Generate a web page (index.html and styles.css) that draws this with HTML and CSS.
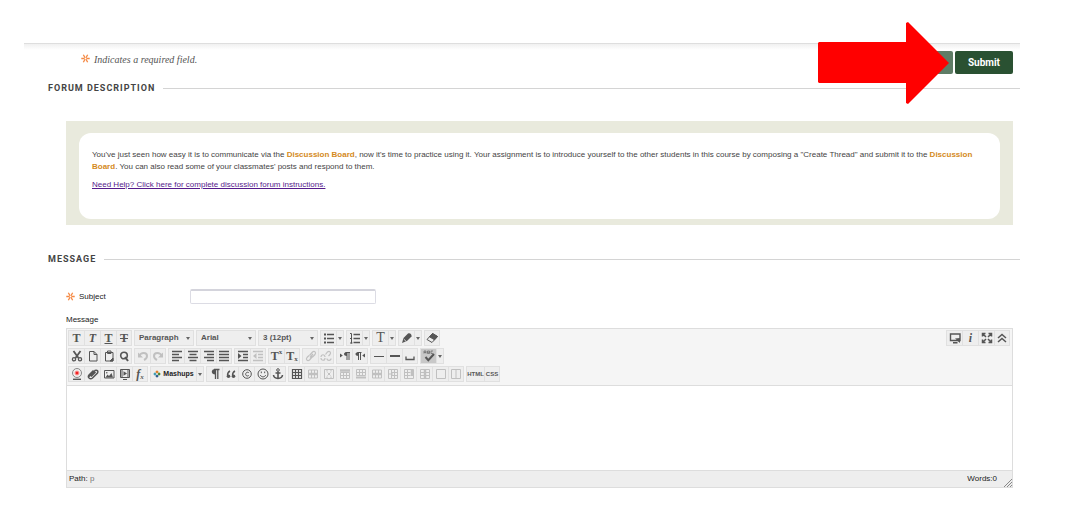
FILE: index.html
```html
<!DOCTYPE html>
<html lang="en">
<head>
<meta charset="utf-8">
<title>Create Thread</title>
<link rel="stylesheet" href="styles.css">
</head>
<body>
<svg class="defs" aria-hidden="true">
  <symbol id="star" viewBox="0 0 10 10"><path d="M.3 5h9.400M2.600.8l4.800 8.400M7.400.8L2.600 9.200" stroke="#f58a45" stroke-width="1.500" fill="none"/><circle cx="5" cy="5" r="1" fill="#fff"/></symbol>
  <symbol id="cut" viewBox="0 0 12 12"><path d="M2.500 1l5 7M9.500 1l-5 7" stroke-width="1.800"/><circle cx="3" cy="9.300" r="1.600" stroke-width="1.300"/><circle cx="9" cy="9.300" r="1.600" stroke-width="1.300"/></symbol>
  <symbol id="page" viewBox="0 0 12 12"><path d="M2.500 1.500h4.500l3 3v6.500h-7.500zM7 1.500v3h3"/></symbol>
  <symbol id="paste" viewBox="0 0 12 12"><path d="M2.500 2.500h7.500v8.500H2.500zM4.500 1h3.500v2.500H4.500z"/><path d="M7 11l3-3v3z" fill="currentColor"/></symbol>
  <symbol id="find" viewBox="0 0 12 12"><circle cx="6" cy="5.500" r="3.300" stroke-width="1.600"/><path d="M7 7l3 4" stroke-width="2"/></symbol>
  <symbol id="undo" viewBox="0 0 12 12"><path d="M2 6c2-4 8-4 8 0 0 2-1 3-3 4" stroke-width="2"/><path d="M1 2.500v5h5z" fill="currentColor" stroke="none"/></symbol>
  <symbol id="redo" viewBox="0 0 12 12"><path d="M10 6C8 2 2 2 2 6c0 2 1 3 3 4" stroke-width="2"/><path d="M11 2.500v5H6z" fill="currentColor" stroke="none"/></symbol>
  <symbol id="left" viewBox="0 0 12 12"><path d="M1 1.500h10M1 4.500h7M1 7.500h10M1 10.500h7" stroke-width="1.500"/></symbol>
  <symbol id="center" viewBox="0 0 12 12"><path d="M1 1.500h10M2.500 4.500h7M1 7.500h10M2.500 10.500h7" stroke-width="1.500"/></symbol>
  <symbol id="right" viewBox="0 0 12 12"><path d="M1 1.500h10M4 4.500h7M1 7.500h10M4 10.500h7" stroke-width="1.500"/></symbol>
  <symbol id="justify" viewBox="0 0 12 12"><path d="M1 1.500h10M1 4.500h10M1 7.500h10M1 10.500h10" stroke-width="1.500"/></symbol>
  <symbol id="indent" viewBox="0 0 12 12"><path d="M1 1.500h10M6 4.500h5M6 7.500h5M1 10.500h10" stroke-width="1.300"/><path d="M1 3l3.500 3L1 9z" fill="currentColor" stroke="none"/></symbol>
  <symbol id="outdent" viewBox="0 0 12 12"><path d="M1 1.500h10M6 4.500h5M6 7.500h5M1 10.500h10" stroke-width="1.300"/><path d="M4.500 3L1 6l3.500 3z" fill="currentColor" stroke="none"/></symbol>
  <symbol id="bullets" viewBox="0 0 12 12"><path d="M4 2.500h7M4 6.500h7M4 10.500h7" stroke-width="1.300"/><path d="M1 2.500h2M1 6.500h2M1 10.500h2" stroke-width="1.800"/></symbol>
  <symbol id="numbers" viewBox="0 0 12 12"><path d="M4.500 2.500H11M4.500 6.500H11M4.500 10.500H11" stroke-width="1.300"/><path d="M1 1.500h1.500v10M1 11h2.500M1 6.500h1.500"/></symbol>
  <symbol id="pen" viewBox="0 0 12 12"><path d="M1 11l1.500-5L7 1.500c2-1 4 1 3.500 3L6 9z" fill="currentColor" stroke="none"/><path d="M2.800 7.200l2.500 2.300" stroke="#eee" stroke-width=".8"/></symbol>
  <symbol id="eraser" viewBox="0 0 12 12"><path d="M1 7.500l5.500-6 5 3-5.500 6z"/><path d="M3.500 4.800l3-3.300 5 3-3 3.300z" fill="currentColor"/></symbol>
  <symbol id="link" viewBox="0 0 12 12"><path d="M5 7.500l3-3.500M4.500 5.500l3-3.500c2-1.500 4 .5 2.500 2.500L7.500 7M7.500 6.500l-3 3.500c-2 1.500-4-.5-2.500-2.500L4 5.500" stroke-width="1.200"/></symbol>
  <symbol id="unlink" viewBox="0 0 12 12"><path d="M5.500 4.500l2-2.500c2-1.500 4 .5 2.500 2.500L8.500 6M1 7c0-3 4-3 4 0M7 8.500c0 2.500 4 2.500 4 0M5 8c0 3-4 3-4 0" stroke-width="1.200"/></symbol>
  <symbol id="ltr" viewBox="0 0 12 12"><path d="M8 2.500V10M10 2.500V10M6.500 2.500H11"/><path d="M8 2c-4 0-4 4 0 4zM1 3.500v4l2.800-2z" fill="currentColor" stroke="none"/></symbol>
  <symbol id="rtl" viewBox="0 0 12 12"><path d="M4.500 2.500V10M6.500 2.500V10M3.500 2.500h4"/><path d="M4.500 2c-4 0-4 4 0 4zM11 3.500v4l-2.800-2z" fill="currentColor" stroke="none"/></symbol>
  <symbol id="hr" viewBox="0 0 12 12"><path d="M1 6.500h10"/></symbol>
  <symbol id="rule" viewBox="0 0 12 12"><path d="M1 6h10" stroke-width="2"/></symbol>
  <symbol id="space" viewBox="0 0 12 12"><path d="M2 6.500v3h8v-3" stroke-width="1.300"/></symbol>
  <symbol id="spell" viewBox="0 0 12 12"><path d="M2.500 7l2.800 3.200L11 4" stroke-width="2"/><path d="M1 3.500V1h2v2.500M1 2.400h2M4.500 1v2.500h2V1zM4.500 2.300h2M10 1H8v2.500h2" stroke-width=".6"/></symbol>
  <symbol id="record" viewBox="0 0 12 12"><circle cx="6" cy="5" r="4.500" stroke="#888"/><circle cx="6" cy="5" r="2" fill="#e22" stroke="#f99"/><path d="M2 11.300h8" stroke-width="1.400"/></symbol>
  <symbol id="clip" viewBox="0 0 12 12"><path d="M1.500 9l6.500-6.500c2-1 3.500.5 2.500 2.500L5.500 10C3 12 0 9 2 7l4.500-4.500M4 8.500l4.500-4.500" stroke-width="1.500"/></symbol>
  <symbol id="image" viewBox="0 0 12 12"><path d="M1.500 2.500h9.500v7.500H1.500z"/><path d="M2.500 9.500l2-3L6 8l2.500-3L10 9.500z" fill="currentColor" stroke="none"/><circle cx="3.800" cy="4.700" r=".8" fill="currentColor" stroke="none"/></symbol>
  <symbol id="video" viewBox="0 0 12 12"><path d="M1.500 1.500h9v8h-9zM3 1.500v8M9 1.500v8M4 11.500h4"/><path d="M4.500 3.300v4.500L8 5.500z" fill="currentColor" stroke="none"/></symbol>
  <symbol id="mash" viewBox="0 0 10 10"><path d="M5 .3L7.200 2.500 5 4.300 2.800 2.500z" fill="#e47d25"/><path d="M.3 5l2.200-2.200L4.300 5 2.500 7.200z" fill="#3a9ab2"/><path d="M9.700 5L7.500 2.800 5.700 5l1.800 2.200z" fill="#45842e"/><path d="M5 9.700l2.200-2.200L5 5.700 2.800 7.500z" fill="#265c8d"/></symbol>
  <symbol id="pilcrow" viewBox="0 0 12 12"><path d="M6.500 1.500V11M8.800 1.500V11M5 1.500h5.500" stroke-width="1.300"/><path d="M6.500 1c-5 0-5 5.500 0 5.500z" fill="currentColor" stroke="none"/></symbol>
  <symbol id="quote" viewBox="0 0 12 12"><path d="M5 3C3 4 2.500 5.500 2.500 7.500M10 3C8 4 7.500 5.500 7.500 7.500" stroke-width="1.400"/><circle cx="3.500" cy="8.300" r="1.800" fill="currentColor" stroke="none"/><circle cx="8.500" cy="8.300" r="1.800" fill="currentColor" stroke="none"/></symbol>
  <symbol id="copyright" viewBox="0 0 12 12"><circle cx="6" cy="6" r="4.300"/><path d="M7.800 4.700c-3-2-4.500 3-1.500 3.300.7 0 1.200-.3 1.500-.7"/></symbol>
  <symbol id="smile" viewBox="0 0 12 12"><circle cx="6" cy="6" r="5"/><path d="M3.300 7c1 2.500 4.400 2.500 5.400 0M4.300 3.500v1.700M7.700 3.500v1.700"/></symbol>
  <symbol id="anchor" viewBox="0 0 12 12"><circle cx="6" cy="2" r="1.300"/><path d="M6 3.500V10M3.500 5h5M1.500 7c.5 4.500 8.500 4.500 9 0" stroke-width="1.600"/></symbol>
  <symbol id="grid" viewBox="0 0 12 12"><path d="M1.500 1.500h9v9h-9zM4.500 1.500v9M7.500 1.500v9M1.500 4.500h9M1.500 7.500h9" stroke-width="1.200"/></symbol>
  <symbol id="rowdel" viewBox="0 0 12 12"><path d="M1.500 2h9v8h-9zM4.500 2v8M7.500 2v8"/><path d="M1 6h10" stroke-width="2.500"/></symbol>
  <symbol id="celldel" viewBox="0 0 12 12"><path d="M1.500 1.500h9v9h-9zM4.500 4.500l3 3M7.500 4.500l-3 3M4 1.500v2M8 1.500v2M4 8.500v2M8 8.500v2"/></symbol>
  <symbol id="rowup" viewBox="0 0 12 12"><path d="M1.500 4.500h9v6h-9zM4.500 4.500v6M7.500 4.500v6M1.500 7.500h9"/><path d="M1 2.500h10" stroke-width="2.500"/></symbol>
  <symbol id="rowdown" viewBox="0 0 12 12"><path d="M1.500 1.500h9v6h-9zM4.500 1.500v6M7.500 1.500v6M1.500 4.500h9"/><path d="M1 9.500h10" stroke-width="2"/></symbol>
  <symbol id="colleft" viewBox="0 0 12 12"><path d="M4.500 1.500h6v9h-6zM7.500 1.500v9M4.500 4.500h6M4.500 7.500h6M1.500 1.500h3v9h-3zM1 6h5"/></symbol>
  <symbol id="colright" viewBox="0 0 12 12"><path d="M1.500 1.500h9v9h-9zM4.500 1.500v9M1.500 4.500h6M1.500 7.500h6"/><path d="M9 1v7" stroke-width="2.500"/></symbol>
  <symbol id="coldel" viewBox="0 0 12 12"><path d="M1.500 1.500h9v9h-9zM1.500 4.500h9M1.500 7.500h9"/><path d="M6 1v10" stroke-width="2.500"/></symbol>
  <symbol id="merge" viewBox="0 0 12 12"><path d="M1.500 1.500h9v9h-9z"/></symbol>
  <symbol id="split" viewBox="0 0 12 12"><path d="M1.500 1.500h9v9h-9zM6 1.500v9"/></symbol>
  <symbol id="screen" viewBox="0 0 12 12"><path d="M1.500 2h9.500v6.500H1.500zM4 10.800h4.500" stroke-width="1.400"/><path d="M6 6.500L11 6v5z" fill="currentColor" stroke="none"/></symbol>
  <symbol id="full" viewBox="0 0 12 12"><path d="M1.500 4.500v-3h3M7.500 1.500h3v3M10.500 7.500v3h-3M4.500 10.500h-3v-3M1.500 1.500L5 5M10.500 1.500L7 5M10.500 10.500L7 7M1.500 10.500L5 7" stroke-width="1.500"/></symbol>
  <symbol id="collapse" viewBox="0 0 12 12"><path d="M2 6l4-3.500L10 6M2 10l4-3.500L10 10" stroke-width="1.500"/></symbol>
</svg>

<form class="page">
  <header class="topbar"></header>
  <div class="actions">
    <p class="required"><svg class="star"><use href="#star"/></svg>Indicates a required field.</p>
    <div class="buttons">
      <button type="button" class="action draft">Save Draft</button>
      <button type="submit" class="action">Submit</button>
    </div>
    <svg class="arrow" viewBox="0 0 132 82" aria-hidden="true"><path d="M1 20h87V1l2-1 41 41-41 41-2-1V61H1l-1-1V21z" fill="#f00"/></svg>
  </div>

  <section>
    <h2 class="heading">FORUM DESCRIPTION</h2>
    <div class="frame">
      <div class="card">
        <p>You've just seen how easy it is to communicate via the <strong>Discussion Board</strong>, now it's time to practice using it. Your assignment is to introduce yourself to the other students in this course by composing a "Create Thread" and submit it to the <strong>Discussion Board</strong>. You can also read some of your classmates' posts and respond to them.</p>
        <p><a href="#help">Need Help? Click here for complete discussion forum instructions.</a></p>
      </div>
    </div>
  </section>

  <section>
    <h2 class="heading">MESSAGE</h2>
    <div class="fields">
      <div class="subject">
        <label for="subject"><svg class="star"><use href="#star"/></svg>Subject</label>
        <input id="subject" type="text">
      </div>
      <label class="message-label" for="body">Message</label>
      <div class="editor">
        <div class="toolbar">
          <div class="rows">
            <div class="row">
              <div class="group"><button type="button" class="t heavy">T</button><button type="button" class="t heavy italic">T</button><button type="button" class="t heavy under">T</button><button type="button" class="t heavy strike">T</button></div>
              <div class="pick"><select aria-label="Format"><option>Paragraph</option></select></div>
              <div class="pick"><select aria-label="Font"><option>Arial</option></select></div>
              <div class="pick"><select aria-label="Size"><option>3 (12pt)</option></select></div>
              <div class="group"><button type="button" aria-label="Bullets"><svg><use href="#bullets"/></svg></button><button type="button" class="more" aria-label="Bullet styles"></button></div>
              <div class="group"><button type="button" aria-label="Numbers"><svg><use href="#numbers"/></svg></button><button type="button" class="more" aria-label="Number styles"></button></div>
              <div class="group"><button type="button" class="t color">T</button><button type="button" class="more" aria-label="Text colors"></button></div>
              <div class="group"><button type="button" aria-label="Highlight"><svg><use href="#pen"/></svg></button><button type="button" class="more" aria-label="Highlight colors"></button></div>
              <div class="group"><button type="button" aria-label="Clear formatting"><svg><use href="#eraser"/></svg></button></div>
            </div>
            <div class="row">
              <div class="group"><button type="button" aria-label="Cut"><svg><use href="#cut"/></svg></button><button type="button" aria-label="Copy"><svg><use href="#page"/></svg></button><button type="button" aria-label="Paste"><svg><use href="#paste"/></svg></button><button type="button" aria-label="Find"><svg><use href="#find"/></svg></button></div>
              <div class="group"><button type="button" disabled aria-label="Undo"><svg><use href="#undo"/></svg></button><button type="button" disabled aria-label="Redo"><svg><use href="#redo"/></svg></button></div>
              <div class="group"><button type="button" aria-label="Align left"><svg><use href="#left"/></svg></button><button type="button" aria-label="Align center"><svg><use href="#center"/></svg></button><button type="button" aria-label="Align right"><svg><use href="#right"/></svg></button><button type="button" aria-label="Justify"><svg><use href="#justify"/></svg></button></div>
              <div class="group"><button type="button" aria-label="Indent"><svg><use href="#indent"/></svg></button><button type="button" disabled aria-label="Outdent"><svg><use href="#outdent"/></svg></button></div>
              <div class="group"><button type="button" class="t heavy">T<sup>x</sup></button><button type="button" class="t heavy">T<sub>x</sub></button></div>
              <div class="group"><button type="button" disabled aria-label="Link"><svg><use href="#link"/></svg></button><button type="button" disabled aria-label="Unlink"><svg><use href="#unlink"/></svg></button></div>
              <div class="group"><button type="button" aria-label="Left to right"><svg><use href="#ltr"/></svg></button><button type="button" aria-label="Right to left"><svg><use href="#rtl"/></svg></button></div>
              <div class="group"><button type="button" aria-label="Line"><svg><use href="#hr"/></svg></button><button type="button" aria-label="Rule"><svg><use href="#rule"/></svg></button><button type="button" aria-label="Space"><svg><use href="#space"/></svg></button></div>
              <div class="group"><button type="button" class="on" aria-label="Spelling"><svg><use href="#spell"/></svg></button><button type="button" class="more" aria-label="Languages"></button></div>
            </div>
            <div class="row">
              <div class="group"><button type="button" aria-label="Record"><svg><use href="#record"/></svg></button><button type="button" aria-label="Attach"><svg><use href="#clip"/></svg></button><button type="button" aria-label="Image"><svg><use href="#image"/></svg></button><button type="button" aria-label="Video"><svg><use href="#video"/></svg></button><button type="button" class="t heavy italic">f<sub>x</sub></button></div>
              <div class="group"><button type="button" class="mashups"><svg><use href="#mash"/></svg>Mashups</button><button type="button" class="more" aria-label="Mashup types"></button></div>
              <div class="group"><button type="button" aria-label="Paragraph marks"><svg><use href="#pilcrow"/></svg></button><button type="button" aria-label="Quote"><svg><use href="#quote"/></svg></button><button type="button" aria-label="Symbol"><svg><use href="#copyright"/></svg></button><button type="button" aria-label="Emoticon"><svg><use href="#smile"/></svg></button><button type="button" aria-label="Anchor"><svg><use href="#anchor"/></svg></button></div>
              <div class="group"><button type="button" aria-label="Table"><svg><use href="#grid"/></svg></button><button type="button" disabled aria-label="Row properties"><svg><use href="#rowdel"/></svg></button><button type="button" disabled aria-label="Cell properties"><svg><use href="#celldel"/></svg></button><button type="button" disabled aria-label="Row above"><svg><use href="#rowup"/></svg></button><button type="button" disabled aria-label="Row below"><svg><use href="#rowdown"/></svg></button><button type="button" disabled aria-label="Delete row"><svg><use href="#rowdel"/></svg></button><button type="button" disabled aria-label="Column left"><svg><use href="#colleft"/></svg></button><button type="button" disabled aria-label="Column right"><svg><use href="#colright"/></svg></button><button type="button" disabled aria-label="Delete column"><svg><use href="#coldel"/></svg></button><button type="button" disabled aria-label="Merge cells"><svg><use href="#merge"/></svg></button><button type="button" disabled aria-label="Split cells"><svg><use href="#split"/></svg></button></div>
              <div class="group"><button type="button" class="code">HTML</button><button type="button" class="code">CSS</button></div>
            </div>
          </div>
          <div class="group"><button type="button" aria-label="Preview"><svg><use href="#screen"/></svg></button><button type="button" class="t heavy italic" aria-label="Help">i</button><button type="button" aria-label="Full screen"><svg><use href="#full"/></svg></button><button type="button" aria-label="Collapse"><svg><use href="#collapse"/></svg></button></div>
        </div>
        <textarea id="body"></textarea>
        <footer class="status"><span>Path: <span class="node">p</span></span><span class="words">Words:0<svg class="grip" viewBox="0 0 8 8"><path d="M0 8l8-8M3 8l5-5M6 8l2-2" stroke="#888" fill="none"/></svg></span></footer>
      </div>
    </div>
  </section>
</form>
</body>
</html>
```
FILE: styles.css
```css
* { box-sizing: border-box; }
body {
  margin: 0;
  background: #fff;
  color: #333;
  font: 8px/12px "Liberation Sans", Arial, sans-serif;
}
button, input, select, textarea { font: inherit; color: inherit; margin: 0; }
p { margin: 0; }
.defs { display: none; }
.page { padding: 0 55px 0 24px; }
.topbar { height: 43px; }
.actions {
  position: relative;
  display: flex;
  justify-content: space-between;
  align-items: flex-start;
  height: 38px;
  padding: 7px 7px 0 57px;
  border-top: 1px solid #dedede;
  background: linear-gradient(#f0f0f0, #fff 6px);
}
.required {
  display: flex;
  align-items: center;
  gap: 4px;
  padding-top: 2px;
  color: #555;
  font: italic 10px/14px "Liberation Serif", serif;
}
.star { width: 9px; height: 9px; flex: none; }
.required .star { margin-bottom: 4px; }
.buttons { display: flex; gap: 2px; }
.action {
  height: 23px;
  padding: 0 13px;
  border: 0;
  border-radius: 2px;
  background: #2a5132;
  color: #fff;
  font: bold 10px/12px Roboto, sans-serif;
}
.draft { background: #5f7d66; }
.arrow { position: absolute; top: -22px; right: 70px; width: 132px; height: 82px; }

.heading {
  display: flex;
  align-items: center;
  gap: 8px;
  margin: 0;
  padding-left: 24px;
  color: #444;
  font: bold 9px/15px Roboto, "Liberation Sans", sans-serif;
  letter-spacing: 1px;
}
.heading::after { content: ""; flex: 1; height: 1px; background: #d4d4d4; }
.frame {
  margin: 25px 7px 27px 42px;
  padding: 12px 13px 6px;
  background: #e9eadd;
}
.card {
  display: flex;
  flex-direction: column;
  gap: 6px;
  min-height: 86px;
  padding: 16px 5px 16px 13px;
  border-radius: 12px;
  background: #fff;
  color: #444;
}
.card strong { color: #d48a1c; }
.card a { color: #551a8b; }

.fields { padding: 22px 7px 0 42px; color: #222; }
.subject { display: flex; align-items: center; }
.subject label { display: flex; align-items: center; gap: 4px; width: 124px; }
.subject input {
  width: 186px;
  height: 15px;
  padding: 0 3px;
  border: 1px solid #dcdce4;
  border-top: 2px solid #d4d4dc;
  border-radius: 2px;
}
.message-label { display: block; margin: 10px 0 2px; }
.editor { border: 1px solid #ddd; }
.toolbar {
  display: flex;
  justify-content: space-between;
  align-items: flex-start;
  padding: 1px 2px 3px 1px;
  background: #f5f5f5;
}
.rows { display: grid; gap: 2px; }
.row { display: flex; gap: 2px; }
.group, .pick { display: flex; height: 16px; background: #eee; border: 1px solid #e0e0e0; }
.group button {
  display: flex;
  align-items: center;
  justify-content: center;
  width: 16px;
  padding: 0;
  border: 0;
  border-left: 1px solid #e0e0e0;
  background: none;
  color: #555;
}
.group button:first-child { width: 15px; border-left: 0; }
.group button:last-child { width: 15px; }
.group button:only-child { width: 14px; }
.group button:disabled { color: #c0c0c0; }
.group svg { width: 12px; height: 12px; fill: none; stroke: currentColor; stroke-width: 1; flex: none; }
.group .t { font: 12px/14px "Liberation Serif", serif; }
.group .heavy { font-weight: bold; }
.group .italic { font-style: italic; }
.group .under { text-decoration: underline; }
.group .strike { text-decoration: line-through; }
.group .color { font-size: 14px; }
.group sup, .group sub { font-size: 7px; line-height: 7px; }
.group sup { align-self: flex-start; }
.group sub { align-self: flex-end; }
.group .on { background: #c8c8c8; }
.group .more:last-child { width: 7px; }
.more::after, .pick::after {
  content: "";
  border: 2px solid transparent;
  border-top: 3px solid #666;
  border-bottom: 0;
}
.group .mashups:first-child { width: 45px; gap: 2px; color: #222; font-weight: bold; font-size: 7px; }
.group .mashups svg { width: 8px; height: 8px; stroke: none; }
.group .code { font: bold 6px/8px "Liberation Sans", Arial, sans-serif; }
.group .code:first-child { width: 17px; }
.pick { width: 60px; align-items: center; padding-right: 3px; }
.pick select {
  flex: 1;
  min-width: 0;
  height: 14px;
  padding: 0 0 0 4px;
  border: 0;
  background: none;
  appearance: none;
  color: #555;
  font-weight: bold;
}
.editor textarea {
  display: block;
  width: 100%;
  height: 85px;
  padding: 4px;
  border: 0;
  border-top: 1px solid #ddd;
  resize: none;
  background: #fff;
}
.status {
  display: flex;
  justify-content: space-between;
  height: 17px;
  padding-left: 2px;
  border-top: 1px solid #ddd;
  background: #eee;
  line-height: 16px;
}
.node { color: #777; }
.words { display: flex; align-items: flex-end; gap: 7px; }
.grip { width: 8px; height: 8px; }
```
